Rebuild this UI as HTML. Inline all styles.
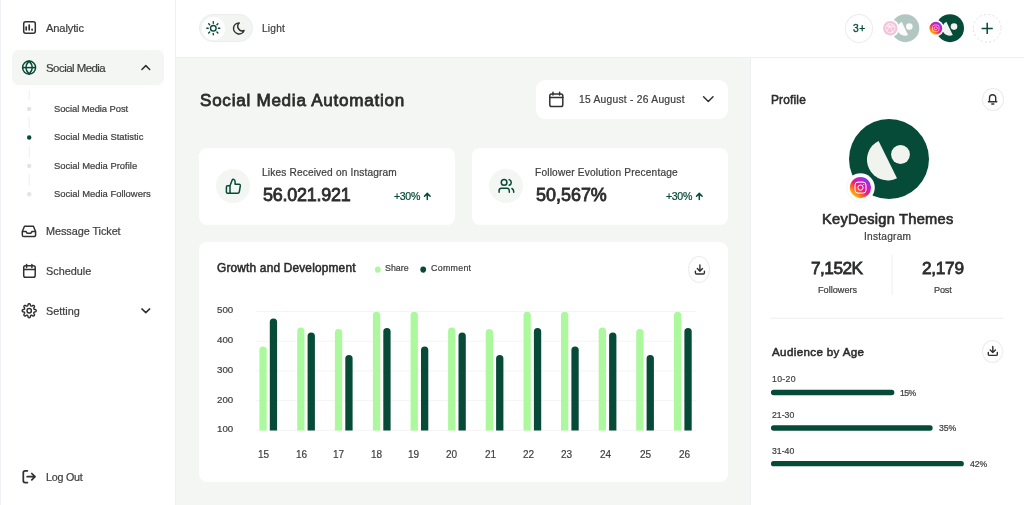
<!DOCTYPE html>
<html><head><meta charset="utf-8">
<style>
*{box-sizing:border-box;margin:0;padding:0}
html,body{width:1024px;height:505px;overflow:hidden}
body{position:relative;background:#f4f6f3;font-family:"Liberation Sans",sans-serif;color:#2a2d2a}
.a{position:absolute}
.t{position:absolute;white-space:nowrap;line-height:1;will-change:transform}
.card{position:absolute;background:#fff}
svg.full{position:absolute;left:0;top:0;width:1024px;height:505px;overflow:visible}
</style></head>
<body>
<div class="a" style="left:0;top:0;width:175px;height:505px;background:#fff"></div><div class="a" style="left:0;top:0;width:1px;height:505px;background:#eef1f6"></div><div class="a" style="left:175px;top:0;width:1px;height:505px;background:#edf0f3"></div><div class="a" style="left:176px;top:0;width:848px;height:57px;background:#fff"></div><div class="a" style="left:176px;top:57px;width:848px;height:1px;background:#edf0f3"></div><div class="a" style="left:751px;top:58px;width:273px;height:447px;background:#fff"></div><div class="a" style="left:750px;top:58px;width:1px;height:447px;background:#edf0f3"></div><div class="a" style="left:12px;top:50px;width:152px;height:35px;background:#f4f6f3;border-radius:7px"></div><div class="a" style="left:199px;top:14px;width:54px;height:28px;background:#f3f5f2;border:1px solid #e9edf0;border-radius:14px"></div><div class="a" style="left:201.5px;top:16.5px;width:23px;height:23px;background:#fff;border-radius:50%"></div><div class="card" style="left:536px;top:79.5px;width:192px;height:39.5px;border-radius:9px"></div><div class="card" style="left:199px;top:148px;width:256px;height:77px;border-radius:8px"></div><div class="card" style="left:472px;top:148px;width:256px;height:77px;border-radius:8px"></div><div class="card" style="left:199px;top:242px;width:529px;height:239.5px;border-radius:8px"></div><div class="a" style="left:215.8px;top:169.1px;width:34.4px;height:34.4px;border-radius:50%;background:#f4f6f3"></div><div class="a" style="left:488.8px;top:169.1px;width:34.4px;height:34.4px;border-radius:50%;background:#f4f6f3"></div><div class="a" style="left:688.3px;top:255.9px;width:22.2px;height:27.4px;border-radius:50%;border:1px solid #ececec"></div><div class="a" style="left:981.5px;top:88px;width:22px;height:22.5px;border-radius:50%;border:1px solid #ececec"></div><div class="a" style="left:981.6px;top:339.9px;width:21.8px;height:22.8px;border-radius:50%;border:1px solid #ececec"></div><div class="a" style="left:844.8px;top:14px;width:28px;height:28.5px;border-radius:50%;border:1px solid #ececec;background:#fff"></div><svg class="full" viewBox="0 0 1024 505"><rect x="23.7" y="21.7" width="11.6" height="11.6" rx="2" fill="none" stroke="#2f322f" stroke-width="1.5"/><path d="M26.2,27V29.8 M29.2,25.1V29.8 M32.1,29.3V29.9" stroke="#2f322f" stroke-width="1.7" stroke-linecap="round"/><g fill="none" stroke="#064a38" stroke-width="1.5"><circle cx="29.1" cy="67.6" r="6.5"/><path d="M29.1,61.1 Q25.9,64.3 25.9,67.6 Q25.9,70.9 29.1,74.1 Q32.3,70.9 32.3,67.6 Q32.3,64.3 29.1,61.1 Z"/><path d="M22.6,67.6H35.6"/></g><path d="M141.9,69.5 L145.8,65.6 L149.7,69.5" fill="none" stroke="#2f322f" stroke-width="1.5" stroke-linecap="round" stroke-linejoin="round"/><path d="M29.2,89.5V100 M29.2,117V128.5 M29.2,145.5V158.5 M29.2,174V185.5" stroke="#efefef" stroke-width="1"/><circle cx="29.2" cy="108.9" r="2.2" fill="#e3e3e3"/><circle cx="29.2" cy="137.5" r="2.2" fill="#064a38"/><circle cx="29.2" cy="165.9" r="2.2" fill="#e3e3e3"/><circle cx="29.2" cy="194.3" r="2.2" fill="#e3e3e3"/><g fill="none" stroke="#2f322f" stroke-width="1.5" stroke-linejoin="round"><path d="M22.3,231.5 L24.5,226.3 H33.4 L35.6,231.5 V235 A1.6,1.6 0 0 1 34,236.6 H23.9 A1.6,1.6 0 0 1 22.3,235 Z"/><path d="M22.3,231.5 H26 L27,233.2 H31 L32,231.5 H35.6"/></g><g fill="none" stroke="#2f322f" stroke-width="1.5" stroke-linecap="round"><rect x="23.7" y="265.8" width="11.5" height="11.4" rx="1.8"/><path d="M23.7,269.4H35.2 M26.6,264.4V267.4 M31.9,264.4V267.4"/></g><g fill="none" stroke="#2f322f" stroke-width="1.45" stroke-linejoin="round"><path d="M29.20,303.70 L29.38,303.72 L29.56,303.76 L29.74,303.84 L29.91,303.95 L30.07,304.10 L30.22,304.29 L30.34,304.55 L30.39,305.08 L30.49,305.35 L30.58,305.54 L30.68,305.70 L30.78,305.83 L30.89,305.94 L31.00,306.02 L31.11,306.08 L31.24,306.12 L31.38,306.14 L31.52,306.14 L31.69,306.12 L31.87,306.08 L32.08,306.01 L32.33,305.88 L32.74,305.54 L33.02,305.45 L33.25,305.42 L33.47,305.43 L33.67,305.47 L33.85,305.54 L34.01,305.63 L34.15,305.75 L34.27,305.89 L34.36,306.05 L34.43,306.23 L34.47,306.43 L34.48,306.65 L34.45,306.88 L34.36,307.16 L34.02,307.57 L33.89,307.82 L33.82,308.03 L33.78,308.21 L33.76,308.38 L33.76,308.52 L33.78,308.66 L33.82,308.79 L33.88,308.90 L33.96,309.01 L34.07,309.12 L34.20,309.22 L34.36,309.32 L34.55,309.41 L34.82,309.51 L35.35,309.56 L35.61,309.68 L35.80,309.83 L35.95,309.99 L36.06,310.16 L36.14,310.34 L36.18,310.52 L36.20,310.70 L36.18,310.88 L36.14,311.06 L36.06,311.24 L35.95,311.41 L35.80,311.57 L35.61,311.72 L35.35,311.84 L34.82,311.89 L34.55,311.99 L34.36,312.08 L34.20,312.18 L34.07,312.28 L33.96,312.39 L33.88,312.50 L33.82,312.61 L33.78,312.74 L33.76,312.88 L33.76,313.02 L33.78,313.19 L33.82,313.37 L33.89,313.58 L34.02,313.83 L34.36,314.24 L34.45,314.52 L34.48,314.75 L34.47,314.97 L34.43,315.17 L34.36,315.35 L34.27,315.51 L34.15,315.65 L34.01,315.77 L33.85,315.86 L33.67,315.93 L33.47,315.97 L33.25,315.98 L33.02,315.95 L32.74,315.86 L32.33,315.52 L32.08,315.39 L31.87,315.32 L31.69,315.28 L31.52,315.26 L31.38,315.26 L31.24,315.28 L31.11,315.32 L31.00,315.38 L30.89,315.46 L30.78,315.57 L30.68,315.70 L30.58,315.86 L30.49,316.05 L30.39,316.32 L30.34,316.85 L30.22,317.11 L30.07,317.30 L29.91,317.45 L29.74,317.56 L29.56,317.64 L29.38,317.68 L29.20,317.70 L29.02,317.68 L28.84,317.64 L28.66,317.56 L28.49,317.45 L28.33,317.30 L28.18,317.11 L28.06,316.85 L28.01,316.32 L27.91,316.05 L27.82,315.86 L27.72,315.70 L27.62,315.57 L27.51,315.46 L27.40,315.38 L27.29,315.32 L27.16,315.28 L27.02,315.26 L26.88,315.26 L26.71,315.28 L26.53,315.32 L26.32,315.39 L26.07,315.52 L25.66,315.86 L25.38,315.95 L25.15,315.98 L24.93,315.97 L24.73,315.93 L24.55,315.86 L24.39,315.77 L24.25,315.65 L24.13,315.51 L24.04,315.35 L23.97,315.17 L23.93,314.97 L23.92,314.75 L23.95,314.52 L24.04,314.24 L24.38,313.83 L24.51,313.58 L24.58,313.37 L24.62,313.19 L24.64,313.02 L24.64,312.88 L24.62,312.74 L24.58,312.61 L24.52,312.50 L24.44,312.39 L24.33,312.28 L24.20,312.18 L24.04,312.08 L23.85,311.99 L23.58,311.89 L23.05,311.84 L22.79,311.72 L22.60,311.57 L22.45,311.41 L22.34,311.24 L22.26,311.06 L22.22,310.88 L22.20,310.70 L22.22,310.52 L22.26,310.34 L22.34,310.16 L22.45,309.99 L22.60,309.83 L22.79,309.68 L23.05,309.56 L23.58,309.51 L23.85,309.41 L24.04,309.32 L24.20,309.22 L24.33,309.12 L24.44,309.01 L24.52,308.90 L24.58,308.79 L24.62,308.66 L24.64,308.52 L24.64,308.38 L24.62,308.21 L24.58,308.03 L24.51,307.82 L24.38,307.57 L24.04,307.16 L23.95,306.88 L23.92,306.65 L23.93,306.43 L23.97,306.23 L24.04,306.05 L24.13,305.89 L24.25,305.75 L24.39,305.63 L24.55,305.54 L24.73,305.47 L24.93,305.43 L25.15,305.42 L25.38,305.45 L25.66,305.54 L26.07,305.88 L26.32,306.01 L26.53,306.08 L26.71,306.12 L26.88,306.14 L27.02,306.14 L27.16,306.12 L27.29,306.08 L27.40,306.02 L27.51,305.94 L27.62,305.83 L27.72,305.70 L27.82,305.54 L27.91,305.35 L28.01,305.08 L28.06,304.55 L28.18,304.29 L28.33,304.10 L28.49,303.95 L28.66,303.84 L28.84,303.76 L29.02,303.72Z"/><circle cx="29.2" cy="310.7" r="2.2"/></g><path d="M141.9,308.9 L145.8,312.6 L149.7,308.9" fill="none" stroke="#2f322f" stroke-width="1.5" stroke-linecap="round" stroke-linejoin="round"/><g fill="none" stroke="#2f322f" stroke-width="1.75" stroke-linecap="round" stroke-linejoin="round"><path d="M27.4,470.8 H25.2 Q23.3,470.8 23.3,472.7 V480.7 Q23.3,482.6 25.2,482.6 H27.4"/><path d="M27.2,476.7 H35 M31.8,473.5 L35,476.7 L31.8,479.9"/></g><g stroke="#064a38" stroke-width="1.4" fill="none" stroke-linecap="round"><circle cx="213.3" cy="28.3" r="2.8"/><path d="M218.40,28.30 L219.80,28.30"/><path d="M216.91,31.91 L217.90,32.90"/><path d="M213.30,33.40 L213.30,34.80"/><path d="M209.69,31.91 L208.70,32.90"/><path d="M208.20,28.30 L206.80,28.30"/><path d="M209.69,24.69 L208.70,23.70"/><path d="M213.30,23.20 L213.30,21.80"/><path d="M216.91,24.69 L217.90,23.70"/></g><path transform="translate(231.7,21.1) scale(0.61)" d="M12 3c.132 0 .263 0 .393 0a7.5 7.5 0 0 0 7.92 12.446a9 9 0 1 1 -8.313 -12.454z" fill="none" stroke="#2f322f" stroke-width="2.4" stroke-linejoin="round"/><g opacity="0.3"><circle cx="905.3" cy="28.2" r="14" fill="#064a38"/><path d="M901.66,21.86 A7.28,7.28 0 1 0 908.10,34.95 Z" fill="#f1f3ef"/><circle cx="909.32" cy="26.62" r="3.29" fill="#f1f3ef"/></g><circle cx="890.3" cy="28.2" r="9" fill="#fff"/><circle cx="890.3" cy="28.2" r="7.2" fill="#f7c1da"/><g fill="none" stroke="#fff" stroke-width="0.7"><circle cx="890.3" cy="28.2" r="4.6"/><path d="M886,25.5 Q890,28 894.5,26.5 M886.5,31 Q889,27 893,24 M888,23.8 Q892,28 892.6,32.8"/></g><circle cx="950" cy="28.2" r="14" fill="#064a38"/><path d="M946.36,21.86 A7.28,7.28 0 1 0 952.80,34.95 Z" fill="#f1f3ef"/><circle cx="954.02" cy="26.62" r="3.29" fill="#f1f3ef"/><circle cx="935.8" cy="28.2" r="8.2" fill="#fff"/><defs><linearGradient id="ig" x1="0.1" y1="0.95" x2="0.85" y2="0.1"><stop offset="0.05" stop-color="#ffd400"/><stop offset="0.3" stop-color="#ff6a22"/><stop offset="0.52" stop-color="#f5157c"/><stop offset="0.8" stop-color="#b625d6"/><stop offset="1" stop-color="#7a36f0"/></linearGradient></defs><circle cx="935.8" cy="28.2" r="6.4" fill="url(#ig)"/><g fill="none" stroke="#fff" stroke-width="0.6"><rect x="932.6" y="25" width="6.4" height="6.4" rx="1.8"/><circle cx="935.8" cy="28.2" r="1.5"/></g><circle cx="987.2" cy="28.3" r="13.9" fill="none" stroke="#e2e2e2" stroke-width="1" stroke-dasharray="2.2 2.2"/><path d="M987.2,22.8V34 M981.6,28.4H992.8" stroke="#064a38" stroke-width="1.5"/><g fill="none" stroke="#2f322f" stroke-width="1.5" stroke-linecap="round"><rect x="549.8" y="93.9" width="13" height="12.6" rx="1.8"/><path d="M549.8,97.6H562.8 M553,92.2V95 M559.6,92.2V95"/></g><path d="M703.6,96.8 L708.3,101.5 L713,96.8" fill="none" stroke="#2f322f" stroke-width="1.5" stroke-linecap="round" stroke-linejoin="round"/><g fill="none" stroke="#064a38" stroke-width="1.5" stroke-linejoin="round"><path d="M230,185.8 L232.3,179.8 Q232.7,179.1 233.4,179.3 Q235.1,179.9 235.1,181.6 V184.2 H239 Q240.5,184.3 240.3,185.8 L239.3,191.8 Q239.1,193.2 237.7,193.2 H230 Z"/><path d="M230,185.8 H227.5 Q226.4,185.8 226.4,186.9 V192.1 Q226.4,193.2 227.5,193.2 H230"/></g><g fill="none" stroke="#064a38" stroke-width="1.5" stroke-linecap="round"><circle cx="504.1" cy="182.4" r="2.8"/><path d="M499.1,192.3 V190.6 Q499.1,188.3 501.4,188.3 H507 Q509.3,188.3 509.3,190.6 V192.3"/><path d="M509.2,179.6 A3,3 0 0 1 509.2,185.3"/><path d="M511.9,188.5 Q513.7,189.4 513.7,191.5 V192.3"/></g><path d="M427.3,199.6V193.6 M424.5,196.2 L427.3,193.4 L430.1,196.2" fill="none" stroke="#064a38" stroke-width="1.5" stroke-linecap="round" stroke-linejoin="round"/><path d="M699.3,199.6V193.6 M696.5,196.2 L699.3,193.4 L702.0999999999999,196.2" fill="none" stroke="#064a38" stroke-width="1.5" stroke-linecap="round" stroke-linejoin="round"/><g fill="none" stroke="#2f322f" stroke-width="1.4" stroke-linecap="round" stroke-linejoin="round"><path d="M699.9,265.0V271.20000000000005 M697.3,268.6 L699.9,271.20000000000005 L702.5,268.6"/><path d="M695.4,271.1V272.8 Q695.4,274.0 696.6,274.0 H703.1999999999999 Q704.4,274.0 704.4,272.8 V271.1"/></g><g fill="none" stroke="#2f322f" stroke-width="1.4" stroke-linecap="round" stroke-linejoin="round"><path d="M992.8,346.4V352.6 M990.1999999999999,350.0 L992.8,352.6 L995.4,350.0"/><path d="M988.3,352.5V354.2 Q988.3,355.4 989.5,355.4 H996.0999999999999 Q997.3,355.4 997.3,354.2 V352.5"/></g><g fill="none" stroke="#2f322f" stroke-width="1.4" stroke-linecap="round" stroke-linejoin="round"><path d="M988.4,101.8 H996.8 M989.5,101.8 V97.8 A3.1,3.1 0 0 1 995.7,97.8 V101.8"/><path d="M991.8,104 H993.8"/></g><path d="M256,311.5H696" stroke="#f4f4f4" stroke-width="1"/><path d="M256,341.2H696" stroke="#f4f4f4" stroke-width="1"/><path d="M256,370.9H696" stroke="#f4f4f4" stroke-width="1"/><path d="M256,400.6H696" stroke="#f4f4f4" stroke-width="1"/><path d="M256,430.3H696" stroke="#f4f4f4" stroke-width="1"/><path d="M259.40,430.5 V350.25 A3.65,3.65 0 0 1 266.70,350.25 V430.5 Z" fill="#abf99c"/><path d="M269.80,430.5 V322.15 A3.65,3.65 0 0 1 277.10,322.15 V430.5 Z" fill="#064a38"/><path d="M297.20,430.5 V331.15 A3.65,3.65 0 0 1 304.50,331.15 V430.5 Z" fill="#abf99c"/><path d="M307.60,430.5 V336.05 A3.65,3.65 0 0 1 314.90,336.05 V430.5 Z" fill="#064a38"/><path d="M334.90,430.5 V332.65 A3.65,3.65 0 0 1 342.20,332.65 V430.5 Z" fill="#abf99c"/><path d="M345.30,430.5 V358.55 A3.65,3.65 0 0 1 352.60,358.55 V430.5 Z" fill="#064a38"/><path d="M372.90,430.5 V315.35 A3.65,3.65 0 0 1 380.20,315.35 V430.5 Z" fill="#abf99c"/><path d="M383.30,430.5 V331.55 A3.65,3.65 0 0 1 390.60,331.55 V430.5 Z" fill="#064a38"/><path d="M410.60,430.5 V315.35 A3.65,3.65 0 0 1 417.90,315.35 V430.5 Z" fill="#abf99c"/><path d="M421.00,430.5 V350.25 A3.65,3.65 0 0 1 428.30,350.25 V430.5 Z" fill="#064a38"/><path d="M448.10,430.5 V331.15 A3.65,3.65 0 0 1 455.40,331.15 V430.5 Z" fill="#abf99c"/><path d="M458.50,430.5 V336.05 A3.65,3.65 0 0 1 465.80,336.05 V430.5 Z" fill="#064a38"/><path d="M485.70,430.5 V332.65 A3.65,3.65 0 0 1 493.00,332.65 V430.5 Z" fill="#abf99c"/><path d="M496.10,430.5 V358.55 A3.65,3.65 0 0 1 503.40,358.55 V430.5 Z" fill="#064a38"/><path d="M523.50,430.5 V315.35 A3.65,3.65 0 0 1 530.80,315.35 V430.5 Z" fill="#abf99c"/><path d="M533.90,430.5 V331.55 A3.65,3.65 0 0 1 541.20,331.55 V430.5 Z" fill="#064a38"/><path d="M561.00,430.5 V315.35 A3.65,3.65 0 0 1 568.30,315.35 V430.5 Z" fill="#abf99c"/><path d="M571.40,430.5 V350.25 A3.65,3.65 0 0 1 578.70,350.25 V430.5 Z" fill="#064a38"/><path d="M598.70,430.5 V331.15 A3.65,3.65 0 0 1 606.00,331.15 V430.5 Z" fill="#abf99c"/><path d="M609.10,430.5 V336.05 A3.65,3.65 0 0 1 616.40,336.05 V430.5 Z" fill="#064a38"/><path d="M636.20,430.5 V332.65 A3.65,3.65 0 0 1 643.50,332.65 V430.5 Z" fill="#abf99c"/><path d="M646.60,430.5 V358.55 A3.65,3.65 0 0 1 653.90,358.55 V430.5 Z" fill="#064a38"/><path d="M674.00,430.5 V315.35 A3.65,3.65 0 0 1 681.30,315.35 V430.5 Z" fill="#abf99c"/><path d="M684.40,430.5 V331.55 A3.65,3.65 0 0 1 691.70,331.55 V430.5 Z" fill="#064a38"/><ellipse cx="377.8" cy="269.6" rx="2.9" ry="3.1" fill="#abf99c"/><ellipse cx="423.2" cy="269.6" rx="2.9" ry="3.1" fill="#064a38"/><circle cx="889" cy="159" r="40" fill="#064a38"/><path d="M878.60,140.90 A20.80,20.80 0 1 0 897.00,178.30 Z" fill="#f1f3ef"/><circle cx="900.50" cy="154.50" r="9.40" fill="#f1f3ef"/><circle cx="860.5" cy="187.6" r="14.3" fill="#f7f7f7"/><circle cx="860.5" cy="187.6" r="13.1" fill="#fff"/><circle cx="860.5" cy="187.6" r="10.6" fill="url(#ig)"/><g fill="none" stroke="#fff" stroke-width="1"><rect x="855" y="182.1" width="11" height="11" rx="3"/><circle cx="860.5" cy="187.6" r="2.6"/></g><circle cx="863.7" cy="184.5" r="0.6" fill="#fff"/><path d="M892.1,254.5V295" stroke="#eeeeee" stroke-width="1"/><path d="M770,318.2H1003.5" stroke="#eeeeee" stroke-width="1"/><path d="M773.6,392.5H891.6999999999999" stroke="#064a38" stroke-width="5.3" stroke-linecap="round"/><path d="M773.6,428H930.0" stroke="#064a38" stroke-width="5.3" stroke-linecap="round"/><path d="M773.6,463.7H961.1999999999999" stroke="#064a38" stroke-width="5.3" stroke-linecap="round"/></svg>
<div class="t" style="left:46.00px;top:23.00px;font-size:11.16px;color:#3d403d;letter-spacing:-0.155px;-webkit-text-stroke:0.22px #3d403d;">Analytic</div>
<div class="t" style="left:45.70px;top:63.00px;font-size:11.45px;color:#3d403d;letter-spacing:-0.525px;-webkit-text-stroke:0.22px #3d403d;">Social Media</div>
<div class="t" style="left:54.20px;top:104.00px;font-size:9.42px;color:#3d403d;letter-spacing:-0.069px;-webkit-text-stroke:0.22px #3d403d;">Social Media Post</div>
<div class="t" style="left:54.20px;top:132.00px;font-size:9.42px;color:#3d403d;-webkit-text-stroke:0.22px #3d403d;">Social Media Statistic</div>
<div class="t" style="left:54.20px;top:161.00px;font-size:9.42px;color:#3d403d;-webkit-text-stroke:0.22px #3d403d;">Social Media Profile</div>
<div class="t" style="left:54.20px;top:189.00px;font-size:9.42px;color:#3d403d;-webkit-text-stroke:0.22px #3d403d;">Social Media Followers</div>
<div class="t" style="left:45.90px;top:226.00px;font-size:10.87px;color:#3d403d;letter-spacing:-0.063px;-webkit-text-stroke:0.22px #3d403d;">Message Ticket</div>
<div class="t" style="left:45.90px;top:266.00px;font-size:10.87px;color:#3d403d;-webkit-text-stroke:0.22px #3d403d;">Schedule</div>
<div class="t" style="left:45.90px;top:306.00px;font-size:10.87px;color:#3d403d;-webkit-text-stroke:0.22px #3d403d;">Setting</div>
<div class="t" style="left:45.90px;top:472.00px;font-size:10.72px;color:#3d403d;letter-spacing:-0.242px;-webkit-text-stroke:0.22px #3d403d;">Log Out</div>
<div class="t" style="left:261.90px;top:24.00px;font-size:10.14px;color:#3d403d;letter-spacing:0.228px;-webkit-text-stroke:0.22px #3d403d;">Light</div>
<div class="t" style="left:852.70px;top:24.00px;font-size:10.29px;color:#064a38;letter-spacing:0.570px;-webkit-text-stroke:0.35px #064a38;">3+</div>
<div class="t" style="left:199.70px;top:92.00px;font-size:17.10px;color:#2a2d2a;letter-spacing:0.730px;-webkit-text-stroke:0.77px #2a2d2a;">Social Media Automation</div>
<div class="t" style="left:579.20px;top:95.00px;font-size:10.29px;color:#3d403d;letter-spacing:0.246px;-webkit-text-stroke:0.22px #3d403d;">15 August - 26 August</div>
<div class="t" style="left:262.00px;top:168.00px;font-size:10.14px;color:#3d403d;letter-spacing:0.161px;-webkit-text-stroke:0.22px #3d403d;">Likes Received on Instagram</div>
<div class="t" style="left:262.60px;top:187.00px;font-size:17.97px;color:#2a2d2a;letter-spacing:-0.227px;-webkit-text-stroke:0.81px #2a2d2a;">56.021.921</div>
<div class="t" style="left:393.90px;top:191.00px;font-size:10.58px;color:#064a38;letter-spacing:-0.350px;-webkit-text-stroke:0.22px #064a38;">+30%</div>
<div class="t" style="left:535.30px;top:168.00px;font-size:10.14px;color:#3d403d;letter-spacing:0.193px;-webkit-text-stroke:0.22px #3d403d;">Follower Evolution Precentage</div>
<div class="t" style="left:535.50px;top:187.00px;font-size:17.97px;color:#2a2d2a;letter-spacing:-0.007px;-webkit-text-stroke:0.81px #2a2d2a;">50,567%</div>
<div class="t" style="left:666.20px;top:191.00px;font-size:10.58px;color:#064a38;letter-spacing:-0.350px;-webkit-text-stroke:0.22px #064a38;">+30%</div>
<div class="t" style="left:216.70px;top:263.00px;font-size:11.88px;color:#2a2d2a;letter-spacing:0.183px;-webkit-text-stroke:0.53px #2a2d2a;">Growth and Development</div>
<div class="t" style="left:384.80px;top:264.00px;font-size:8.84px;color:#3d403d;letter-spacing:0.004px;-webkit-text-stroke:0.22px #3d403d;">Share</div>
<div class="t" style="left:430.50px;top:264.00px;font-size:8.84px;color:#3d403d;letter-spacing:0.296px;-webkit-text-stroke:0.22px #3d403d;">Comment</div>
<div class="t" style="left:216.51px;top:305.00px;font-size:9.71px;color:#3d403d;-webkit-text-stroke:0.22px #3d403d;">500</div>
<div class="t" style="left:216.51px;top:335.00px;font-size:9.71px;color:#3d403d;-webkit-text-stroke:0.22px #3d403d;">400</div>
<div class="t" style="left:216.51px;top:365.00px;font-size:9.71px;color:#3d403d;-webkit-text-stroke:0.22px #3d403d;">300</div>
<div class="t" style="left:216.51px;top:395.00px;font-size:9.71px;color:#3d403d;-webkit-text-stroke:0.22px #3d403d;">200</div>
<div class="t" style="left:216.51px;top:424.00px;font-size:9.71px;color:#3d403d;-webkit-text-stroke:0.22px #3d403d;">100</div>
<div class="t" style="left:257.94px;top:450.00px;font-size:10.00px;color:#3d403d;-webkit-text-stroke:0.2px #3d403d;">15</div>
<div class="t" style="left:295.64px;top:450.00px;font-size:10.00px;color:#3d403d;-webkit-text-stroke:0.2px #3d403d;">16</div>
<div class="t" style="left:333.14px;top:450.00px;font-size:10.00px;color:#3d403d;-webkit-text-stroke:0.2px #3d403d;">17</div>
<div class="t" style="left:370.64px;top:450.00px;font-size:10.00px;color:#3d403d;-webkit-text-stroke:0.2px #3d403d;">18</div>
<div class="t" style="left:407.94px;top:450.00px;font-size:10.00px;color:#3d403d;-webkit-text-stroke:0.2px #3d403d;">19</div>
<div class="t" style="left:446.14px;top:450.00px;font-size:10.00px;color:#3d403d;-webkit-text-stroke:0.2px #3d403d;">20</div>
<div class="t" style="left:484.64px;top:450.00px;font-size:10.00px;color:#3d403d;-webkit-text-stroke:0.2px #3d403d;">21</div>
<div class="t" style="left:523.34px;top:450.00px;font-size:10.00px;color:#3d403d;-webkit-text-stroke:0.2px #3d403d;">22</div>
<div class="t" style="left:561.44px;top:450.00px;font-size:10.00px;color:#3d403d;-webkit-text-stroke:0.2px #3d403d;">23</div>
<div class="t" style="left:600.34px;top:450.00px;font-size:10.00px;color:#3d403d;-webkit-text-stroke:0.2px #3d403d;">24</div>
<div class="t" style="left:639.64px;top:450.00px;font-size:10.00px;color:#3d403d;-webkit-text-stroke:0.2px #3d403d;">25</div>
<div class="t" style="left:678.94px;top:450.00px;font-size:10.00px;color:#3d403d;-webkit-text-stroke:0.2px #3d403d;">26</div>
<div class="t" style="left:771.10px;top:95.00px;font-size:11.88px;color:#2a2d2a;letter-spacing:0.185px;-webkit-text-stroke:0.53px #2a2d2a;">Profile</div>
<div class="t" style="left:822.20px;top:212.00px;font-size:14.64px;color:#2a2d2a;letter-spacing:0.256px;-webkit-text-stroke:0.66px #2a2d2a;">KeyDesign Themes</div>
<div class="t" style="left:863.80px;top:232.00px;font-size:10.14px;color:#3d403d;letter-spacing:0.248px;-webkit-text-stroke:0.22px #3d403d;">Instagram</div>
<div class="t" style="left:810.90px;top:260.00px;font-size:17.25px;color:#2a2d2a;letter-spacing:-0.514px;-webkit-text-stroke:0.78px #2a2d2a;">7,152K</div>
<div class="t" style="left:922.40px;top:260.00px;font-size:17.25px;color:#2a2d2a;letter-spacing:-0.290px;-webkit-text-stroke:0.78px #2a2d2a;">2,179</div>
<div class="t" style="left:817.80px;top:286.00px;font-size:9.13px;color:#3d403d;letter-spacing:0.015px;-webkit-text-stroke:0.22px #3d403d;">Followers</div>
<div class="t" style="left:934.30px;top:286.00px;font-size:9.13px;color:#3d403d;letter-spacing:-0.154px;-webkit-text-stroke:0.22px #3d403d;">Post</div>
<div class="t" style="left:771.50px;top:347.00px;font-size:11.59px;color:#2a2d2a;letter-spacing:0.363px;-webkit-text-stroke:0.52px #2a2d2a;">Audience by Age</div>
<div class="t" style="left:771.50px;top:375.00px;font-size:8.70px;color:#3d403d;letter-spacing:0.315px;-webkit-text-stroke:0.22px #3d403d;">10-20</div>
<div class="t" style="left:771.50px;top:411.00px;font-size:8.70px;color:#3d403d;-webkit-text-stroke:0.22px #3d403d;">21-30</div>
<div class="t" style="left:771.50px;top:447.00px;font-size:8.70px;color:#3d403d;-webkit-text-stroke:0.22px #3d403d;">31-40</div>
<div class="t" style="left:900.20px;top:389.00px;font-size:8.70px;color:#3d403d;letter-spacing:-0.557px;-webkit-text-stroke:0.22px #3d403d;">15%</div>
<div class="t" style="left:938.50px;top:424.00px;font-size:8.70px;color:#3d403d;letter-spacing:-0.107px;-webkit-text-stroke:0.22px #3d403d;">35%</div>
<div class="t" style="left:969.70px;top:460.00px;font-size:8.70px;color:#3d403d;letter-spacing:-0.107px;-webkit-text-stroke:0.22px #3d403d;">42%</div>
</body></html>
